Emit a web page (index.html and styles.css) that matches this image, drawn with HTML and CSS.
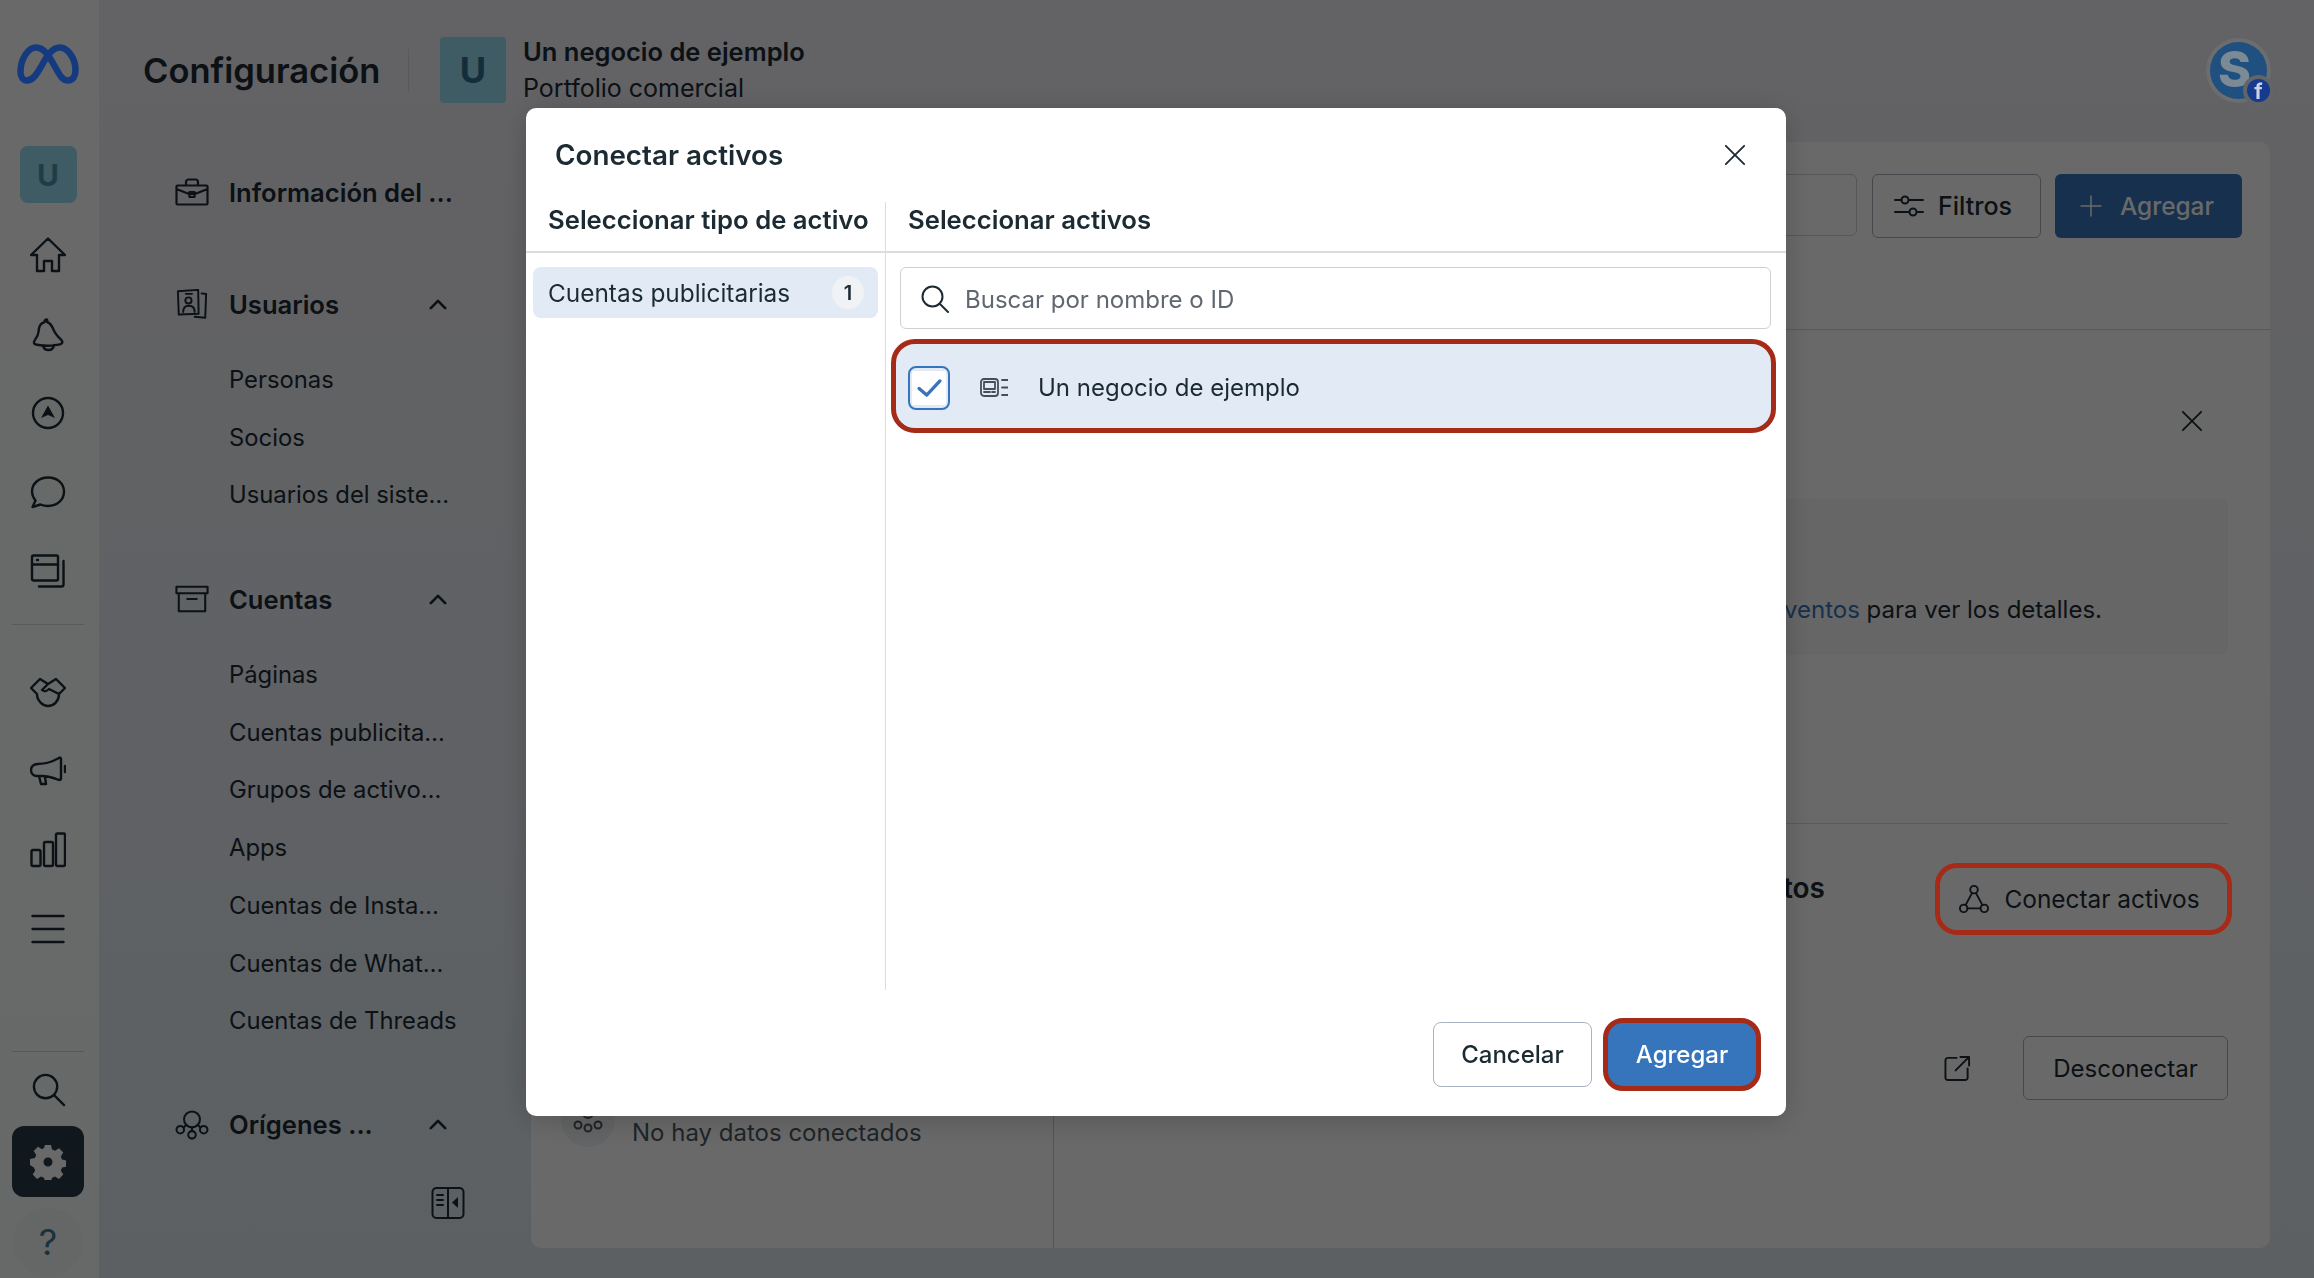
FILE: index.html
```html
<!DOCTYPE html>
<html lang="es">
<head>
  <meta charset="UTF-8" />
  <meta name="viewport" content="width=device-width, initial-scale=1.0" />
  <title>Configuración</title>
  <link rel="stylesheet" href="styles.css">
</head>
<body>
  <div class="app">
    <!-- barra de iconos -->
    <aside class="rail">
      <svg class="meta-logo" viewBox="0 0 62 40"><path d="M3.500 28C3.500 15 11 3.500 19 3.500c8 0 13 8.500 18 17.500s8 15.500 14 15.500c5 0 7.500-4.500 7.500-10.500C58.500 15 51 3.500 43 3.500c-8 0-13 8.500-18 17.500s-9 15.500-15 15.500c-4 0-6.500-3.500-6.500-8.500z"/></svg>
      <div class="rail-avatar">U</div>
      <div class="rail-icon"><svg viewBox="0 0 36 36"><path d="M18 1.500 35 18h-6v16h-7V24h-8v10H7V18H1z"/></svg></div>
      <div class="rail-icon"><svg viewBox="0 0 36 36"><path d="M17 3.500c-1.500 0-2.500 1-2.500 2.500C9 8 9 12 8.500 16c-.5 5-4 7.500-4.500 10-.3 2 1 2.500 3 2.800 7 1.200 16 1.200 23-.5 2-.5 3-2 2-3.500-2-3-5-4-7.500-9-2-4-2.500-8-7.500-9.800C17.500 5 17.500 4 17 3.500zM13 29.500c.5 3 3 4.500 5.500 4.500s5-1.500 5.500-5"/></svg></div>
      <div class="rail-icon"><svg viewBox="0 0 36 36"><circle cx="18" cy="18" r="15"/><path class="solid" d="M18 10.500 25 23l-7-3-7 3z"/></svg></div>
      <div class="rail-icon"><svg viewBox="0 0 36 36"><path d="M18 3.500C9 3.500 2 9.500 2 17.500c0 3.500 1.500 6.500 3.500 9L2.500 33l8-2.500c2.300 1 4.800 1.500 7.500 1.500 9 0 16-6 16-14.500S27 3.500 18 3.500z"/></svg></div>
      <div class="rail-icon"><svg viewBox="0 0 36 36"><rect x="2" y="2.500" width="26" height="25" rx="1.500"/><path d="M2 11.500h26M7 7h1M33.500 8v23.500a2 2 0 0 1-2 2H9"/></svg></div>
      <div class="rail-divider rail-divider-top"></div>
      <div class="rail-icon"><svg viewBox="0 0 36 30"><path d="M10 2 1 11l6 6c0 7 6 12 11 12 6 0 11-5 11-12l6-6-9-9-8 5zM18 7l-6 6c2 2 5 1 7-1l10 5"/></svg></div>
      <div class="rail-icon"><svg viewBox="0 0 36 30"><path d="M29 2C22 6 14 8 8 8c-5 0-7 3-7 6s2 6 6 6h5c6 0 12 2 17 4 1 0 2-1 2-2V3c0-1-1-2-2-1zM9 20l2 8h5l-1-7M35 10v6"/></svg></div>
      <div class="rail-icon"><svg viewBox="0 0 36 36"><rect x="1.500" y="18" width="9" height="16" rx="1.500"/><rect x="14" y="10" width="9" height="24" rx="1.500"/><rect x="26" y="1.500" width="9" height="32.500" rx="1.500"/></svg></div>
      <div class="rail-icon"><svg viewBox="0 0 36 36"><path d="M2.500 5h31M2.500 18h31M2.500 31h31"/></svg></div>
      <div class="rail-spacer"></div>
      <div class="rail-divider"></div>
      <div class="rail-search"><svg viewBox="0 0 36 36"><circle cx="15" cy="15" r="12"/><path d="M24 24l10 10"/></svg></div>
      <div class="rail-gear">
        <svg viewBox="0 0 36 36"><path fill="currentColor" fill-rule="evenodd" d="M15 1h6l1 4.500 3 1.300 4-2.500 4.300 4.300-2.500 4 1.300 3 4.900 1v6l-4.900 1-1.300 3 2.500 4-4.300 4.300-4-2.500-3 1.300-1 4.800h-6l-1-4.800-3-1.300-4 2.500-4.300-4.300 2.500-4-1.300-3L0 21v-6l4.900-1 1.300-3-2.500-4L8 2.800l4 2.500 2-1.300zM18 13.500a4.500 4.500 0 1 0 0 9 4.500 4.500 0 0 0 0-9z"/></svg>
      </div>
      <div class="rail-help">?</div>
    </aside>

    <div class="page">
      <header class="topbar">
        <h1 class="topbar-title">Configuración</h1>
        <div class="topbar-sep"></div>
        <div class="org-avatar">U</div>
        <div class="org-info">
          <div class="org-name">Un negocio de ejemplo</div>
          <div class="org-type">Portfolio comercial</div>
        </div>
        <div class="user-avatar">S<span class="fb-badge">f</span></div>
      </header>

      <div class="workspace">
        <nav class="sidebar">
          <div class="nav-section nav-section-first">
            <div class="nav-head">
              <svg viewBox="0 0 34 28"><path d="M2.500 7.500h29a1 1 0 0 1 1 1v17a1 1 0 0 1-1 1h-29a1 1 0 0 1-1-1v-17a1 1 0 0 1 1-1zM1.500 11 14 16h6l12.500-5M11 7.500V4c0-1.500 1-2.500 2.500-2.500h7C22 1.500 23 2.500 23 4v3.500M14.500 14h5v5h-5z"/></svg>
              <span>Información del ...</span>
            </div>
          </div>
          <div class="nav-section">
            <div class="nav-head">
              <svg viewBox="0 0 36 34"><path d="M2 2.500 25 1l.5 27L3 29zM29 5l5 .5-1 27-12-1M11 5.500h7M8 26c0-5 3-7 6.500-7s6.500 2 6.500 7"/><circle cx="14" cy="13" r="3.500"/></svg>
              <span>Usuarios</span>
              <svg class="chevron" viewBox="0 0 20 12"><path d="M2 10l8-8 8 8"/></svg>
            </div>
            <a class="nav-item">Personas</a>
            <a class="nav-item">Socios</a>
            <a class="nav-item">Usuarios del siste…</a>
          </div>
          <div class="nav-section">
            <div class="nav-head">
              <svg viewBox="0 0 36 30"><path d="M1.500 2h33v7h-33zM4 9v19h28V9M13 15h10"/></svg>
              <span>Cuentas</span>
              <svg class="chevron" viewBox="0 0 20 12"><path d="M2 10l8-8 8 8"/></svg>
            </div>
            <a class="nav-item">Páginas</a>
            <a class="nav-item">Cuentas publicita…</a>
            <a class="nav-item">Grupos de activo…</a>
            <a class="nav-item">Apps</a>
            <a class="nav-item">Cuentas de Insta…</a>
            <a class="nav-item">Cuentas de What…</a>
            <a class="nav-item">Cuentas de Threads</a>
          </div>
          <div class="nav-section">
            <div class="nav-head">
              <svg viewBox="0 0 36 32"><circle cx="18" cy="10" r="8.500"/><circle cx="5.500" cy="21" r="4"/><circle cx="18" cy="26.500" r="4"/><circle cx="30.500" cy="21" r="4"/><path d="M12 16l-3 2.500M18 18.500v4M24 16l3 2.500"/></svg>
              <span>Orígenes ...</span>
              <svg class="chevron" viewBox="0 0 20 12"><path d="M2 10l8-8 8 8"/></svg>
            </div>
          </div>
          <div class="sidebar-toggle">
            <svg viewBox="0 0 34 34"><rect x="1.500" y="2" width="31" height="30" rx="4"/><path d="M17 2v30M6 9h6M6 14h6M6 19h6"/><path class="solid" d="M27 11v11l-6-5.500z"/></svg>
          </div>
        </nav>

        <main class="panel">
          <div class="panel-toolbar">
            <div class="toolbar-search"></div>
            <button class="btn btn-outline btn-filter">
              <svg viewBox="0 0 30 24"><path d="M1 6h6M15 6h14M1 18h14M23 18h6"/><circle cx="11" cy="6" r="3.500"/><circle cx="19" cy="18" r="3.500"/></svg>
              Filtros
            </button>
            <button class="btn btn-primary">
              <svg viewBox="0 0 22 22"><path d="M11 1v20M1 11h20"/></svg>
              Agregar
            </button>
          </div>
          <div class="panel-body">
            <div class="panel-list">
              <div class="empty-row">
                <div class="empty-icon">
                  <svg viewBox="0 0 30 30"><circle cx="15" cy="8" r="5"/><circle cx="5" cy="20" r="3.500"/><circle cx="15" cy="23" r="3.500"/><circle cx="25" cy="20" r="3.500"/></svg>
                </div>
                <span>No hay datos conectados</span>
              </div>
            </div>
            <div class="panel-detail">
              <div class="detail-close">
                <svg viewBox="0 0 24 24"><path d="M2 2l20 20M22 2 2 22"/></svg>
              </div>
              <div class="detail-note">
                <p>Selecciona uno de los <a>eventos</a> para ver los detalles.</p>
              </div>
              <div class="detail-section">
                <h2>Conjuntos</h2>
                <button class="btn btn-plain">
                  <svg viewBox="0 0 32 32"><circle cx="16" cy="6" r="4"/><circle cx="5" cy="26" r="4"/><circle cx="27" cy="26" r="4"/><path d="M14 9.500 7 22.500M18 9.500l7 13M9 26h14"/></svg>
                  Conectar activos
                </button>
              </div>
              <div class="detail-actions">
                <svg viewBox="0 0 28 28"><path d="M13 3H4a2.500 2.500 0 0 0-2.500 2.500v18A2.500 2.500 0 0 0 4 26h18a2.500 2.500 0 0 0 2.500-2.500V14M12 16 26 2M17 2h9v9"/></svg>
                <button class="btn btn-outline btn-disconnect">Desconectar</button>
              </div>
            </div>
          </div>
        </main>
      </div>
    </div>
  </div>

  <!-- capa oscura y dialogo -->
  <div class="overlay">
    <div class="callout callout-connect"></div>
    <div class="modal">
      <div class="modal-header">
        <h2>Conectar activos</h2>
        <svg class="modal-close" viewBox="0 0 24 24"><path d="M2 2l20 20M22 2 2 22"/></svg>
      </div>
      <div class="modal-columns">
        <div class="col-types">
          <div class="col-title">Seleccionar tipo de activo</div>
          <div class="type-item">
            <span>Cuentas publicitarias</span>
            <span class="type-count">1</span>
          </div>
        </div>
        <div class="col-assets">
          <div class="col-title">Seleccionar activos</div>
          <div class="asset-search">
            <svg viewBox="0 0 28 28"><circle cx="11.500" cy="11.500" r="10"/><path d="M19 19l8 8"/></svg>
            <span>Buscar por nombre o ID</span>
          </div>
          <div class="asset-row">
            <div class="check-box">
              <div class="check-inner">
                <svg viewBox="0 0 26 19"><path d="M2 10l8 7L24 2"/></svg>
              </div>
            </div>
            <svg class="asset-icon" viewBox="0 0 28 19"><rect x="1" y="1" width="17" height="17" rx="3"/><rect x="4" y="4" width="11" height="7"/><path d="M4 14h6M12 14h3M22 2h6M22 9.500h6M22 17h6"/></svg>
            <span>Un negocio de ejemplo</span>
          </div>
        </div>
      </div>
      <div class="modal-footer">
        <button class="btn-modal btn-cancel">Cancelar</button>
        <button class="btn-modal btn-add">Agregar</button>
      </div>
    </div>
  </div>
</body>
</html>
```

FILE: styles.css
```css
* {
  box-sizing: border-box;
}
body {
  margin: 0;
  height: 100vh;
  overflow: hidden;
  font-family: 'Inter', 'Noto Sans', sans-serif;
  color: #1c2b33;
  background: linear-gradient(180deg, #f1eff4, #e1eaf1);
}
svg {
  fill: none;
  stroke: currentColor;
  stroke-width: 2;
  stroke-linejoin: round;
  stroke-linecap: round;
  display: block;
}
svg .solid {
  fill: currentColor;
  stroke: none;
}
button {
  font-family: inherit;
}
.app {
  display: flex;
  height: 100%;
}

/* barra de iconos */
.rail {
  width: 99px;
  flex: none;
  padding-right: 3px;
  display: flex;
  flex-direction: column;
  align-items: center;
  background: linear-gradient(180deg, #ffffff, #fbfeff);
}
/* el logo y el avatar se ven mas vivos que el resto bajo la capa */
.meta-logo {
  width: 62px;
  height: 40px;
  margin-top: 44px;
  color: #143a80;
  stroke-width: 6.500;
  position: relative;
  z-index: 2;
}
.rail-avatar {
  width: 57px;
  height: 57px;
  margin-top: 62px;
  margin-bottom: 12px;
  border-radius: 8px;
  background: #9adcf0;
  color: #4f95ad;
  font-size: 30px;
  font-weight: 700;
  display: flex;
  align-items: center;
  justify-content: center;
}
.rail-icon {
  height: 79px;
  flex: none;
  display: flex;
  align-items: center;
  justify-content: center;
}
.rail-icon svg {
  width: 36px;
  height: 36px;
  stroke-width: 2.400;
}
.rail-divider {
  width: 72px;
  height: 1px;
  flex: none;
  background: #d5d8dc;
}
.rail-divider-top {
  margin-top: 14px;
  margin-bottom: 27px;
}
.rail-spacer {
  flex: 1;
}
.rail-search {
  height: 74px;
  flex: none;
  display: flex;
  align-items: center;
  justify-content: center;
}
.rail-search svg {
  width: 35px;
  height: 35px;
  stroke-width: 2.400;
}
.rail-gear {
  width: 72px;
  height: 71px;
  flex: none;
  border-radius: 12px;
  background: #273a49;
  color: #ffffff;
  display: flex;
  align-items: center;
  justify-content: center;
}
.rail-gear svg {
  width: 36px;
  height: 36px;
  stroke: none;
}
.rail-help {
  width: 70px;
  height: 70px;
  flex: none;
  margin: 10px 0 1px;
  border-radius: 50%;
  background: #f6f7f8;
  color: #3c7d90;
  font-size: 36px;
  display: flex;
  align-items: center;
  justify-content: center;
}

/* cabecera */
.page {
  flex: 1;
  min-width: 0;
  display: flex;
  flex-direction: column;
}
.topbar {
  height: 142px;
  flex: none;
  padding: 0 44px 2px 44px;
  display: flex;
  align-items: center;
}
.topbar-title {
  margin: 0;
  font-size: 34.500px;
  font-weight: 600;
  width: 265px;
  flex: none;
}
.topbar-sep {
  width: 1px;
  height: 43px;
  background: #d5d8dc;
  margin-right: 31px;
}
.org-avatar {
  width: 66px;
  height: 66px;
  flex: none;
  border-radius: 4px;
  background: #9adcf0;
  color: #2f6e8f;
  font-size: 36px;
  font-weight: 700;
  display: flex;
  align-items: center;
  justify-content: center;
}
.org-info {
  margin-left: 17px;
  font-size: 25px;
  line-height: 36px;
}
.org-name {
  font-size: 25.500px;
  font-weight: 600;
}
.user-avatar {
  width: 57px;
  height: 57px;
  margin-left: auto;
  margin-right: 3px;
  border-radius: 50%;
  background: #1f5080;
  box-shadow: 0 0 0 4px #6b6d6e;
  color: #7c8a96;
  font-size: 50px;
  font-weight: 800;
  line-height: 54px;
  text-align: left;
  padding-left: 8px;
  position: relative;
  z-index: 2;
}
.fb-badge {
  position: absolute;
  right: -3px;
  bottom: -3px;
  width: 23px;
  height: 23px;
  border-radius: 50%;
  background: #153a8f;
  box-shadow: 0 0 0 4px #626568;
  color: #c9d3e4;
  font-size: 21px;
  font-weight: 700;
  line-height: 26px;
  text-align: center;
}

/* menu lateral */
.workspace {
  flex: 1;
  min-height: 0;
  display: flex;
}
.sidebar {
  width: 432px;
  flex: none;
  padding: 22px 0 0 76px;
  display: flex;
  flex-direction: column;
}
.nav-section {
  margin-top: 47px;
}
.nav-section-first {
  margin-top: 0;
}
.nav-head {
  height: 58px;
  margin-bottom: 17px;
  padding-bottom: 2px;
  display: flex;
  align-items: center;
  font-size: 25.600px;
  font-weight: 600;
}
.nav-section-first .nav-head {
  margin-bottom: 7px;
}
.nav-head svg {
  width: 34px;
  height: 30px;
  flex: none;
  margin-right: 20px;
  stroke-width: 2.200;
}
.nav-head .chevron {
  width: 18px;
  height: 11px;
  margin-left: auto;
  margin-right: 84px;
  stroke-width: 3;
}
.nav-item {
  display: block;
  height: 57.700px;
  line-height: 57.700px;
  padding-left: 54px;
  font-size: 23.800px;
}
.sidebar-toggle {
  align-self: flex-end;
  margin: 14px 66px 0 0;
}
.sidebar-toggle svg {
  width: 34px;
  height: 34px;
}

/* panel principal */
.panel {
  flex: 1;
  min-width: 0;
  margin: 0 44px 30px 0;
  border-radius: 10px;
  background: #ffffff;
  display: flex;
  flex-direction: column;
}
.panel-toolbar {
  height: 188px;
  flex: none;
  padding: 32px 28px 0 0;
  border-bottom: 1px solid #d5d8dc;
  display: flex;
  align-items: flex-start;
  justify-content: flex-end;
  gap: 14px;
}
.toolbar-search {
  width: 300px;
  height: 62px;
  margin-right: 1px;
  border: 1px solid #cbd0d6;
  border-radius: 6px;
}
.btn {
  height: 64px;
  border-radius: 6px;
  font-size: 25px;
  font-weight: 500;
  display: flex;
  align-items: center;
  justify-content: center;
  cursor: pointer;
  color: inherit;
  background: #ffffff;
  border: none;
}
.btn-outline {
  border: 1px solid #a9b0b8;
}
.btn-filter {
  width: 169px;
  padding-left: 21px;
  justify-content: flex-start;
  gap: 14px;
}
.btn-filter svg {
  width: 30px;
  height: 24px;
}
.btn-primary {
  width: 187px;
  padding-left: 25px;
  justify-content: flex-start;
  gap: 18px;
  font-size: 24.400px;
  background: #3675bb;
  color: #ffffff;
}
.btn-primary svg {
  width: 22px;
  height: 22px;
  stroke-width: 1.500;
}
.panel-body {
  flex: 1;
  min-height: 0;
  display: flex;
}
.panel-list {
  width: 523px;
  flex: none;
  border-right: 1px solid #c6cbd1;
  display: flex;
  flex-direction: column;
  justify-content: flex-end;
  padding: 0 0 97px 30px;
}
.empty-row {
  display: flex;
  align-items: flex-start;
  font-size: 24px;
  color: #4a5862;
}
.empty-row span {
  margin-left: 17px;
  line-height: 36px;
}
.empty-icon {
  width: 54px;
  height: 54px;
  margin-top: -22px;
  border-radius: 50%;
  background: #f1f3f5;
  display: flex;
  align-items: center;
  justify-content: center;
}
.empty-icon svg {
  width: 30px;
  height: 30px;
}
.panel-detail {
  flex: 1;
  min-width: 0;
  padding: 71px 42px 0 0;
}
.detail-close {
  height: 40px;
  display: flex;
  align-items: center;
  justify-content: flex-end;
  padding-right: 25px;
}
.detail-close svg {
  width: 22px;
  height: 22px;
}
.detail-note {
  height: 156px;
  margin-top: 58px;
  margin-left: 30px;
  border-radius: 8px;
  background: #f7f8fa;
  padding: 93px 126px 0 0;
  text-align: right;
  font-size: 24px;
  line-height: 36px;
}
.detail-note p {
  margin: 0;
}
.detail-note a {
  color: #3675bb;
}
.detail-section {
  margin-top: 168px;
  margin-left: 30px;
  border-top: 1px solid #d5d8dc;
  padding-top: 44px;
  display: flex;
  align-items: flex-start;
  justify-content: space-between;
}
.detail-section h2 {
  margin: 0 0 0 auto;
  padding-right: 116px;
  font-size: 28px;
  font-weight: 600;
  line-height: 40px;
}
.btn-plain {
  width: 287px;
  height: 62px;
  gap: 15px;
  flex: none;
  padding-right: 16px;
  font-size: 24.400px;
  font-weight: 400;
}
.btn-plain svg {
  width: 30px;
  height: 30px;
}
.detail-actions {
  margin-top: 106px;
  display: flex;
  align-items: center;
  justify-content: flex-end;
  gap: 52px;
}
.detail-actions svg {
  width: 27px;
  height: 27px;
}
.btn-disconnect {
  width: 205px;
  font-size: 24px;
  font-weight: 400;
}

/* capa y dialogo */
.overlay {
  position: fixed;
  inset: 0;
  background: rgba(0, 0, 0, 0.59);
  display: flex;
  justify-content: center;
  align-items: flex-start;
  padding: 108px 2px 0 0;
}
.callout {
  position: absolute;
  border: 5px solid #a52a18;
  border-radius: 22px;
}
.callout-connect {
  left: 1935px;
  top: 863px;
  width: 297px;
  height: 72px;
}
.modal {
  width: 1260px;
  height: 1008px;
  border-radius: 10px;
  background: #ffffff;
  color: #1c2b33;
  box-shadow: 0 4px 30px rgba(0, 0, 0, 0.2);
  display: flex;
  flex-direction: column;
}
.modal-header {
  height: 94px;
  flex: none;
  padding: 0 40px 0 29px;
  display: flex;
  align-items: center;
  justify-content: space-between;
}
.modal-header h2 {
  margin: 0;
  font-size: 27.800px;
  font-weight: 600;
}
.modal-close {
  width: 22px;
  height: 22px;
}
.modal-columns {
  flex: 1;
  min-height: 0;
  display: flex;
}
.col-title {
  height: 51px;
  flex: none;
  border-bottom: 2px solid #dadde1;
  font-size: 25.700px;
  font-weight: 600;
  line-height: 36px;
}
.col-types {
  width: 360px;
  flex: none;
  border-right: 1px solid #dadde1;
}
.col-types .col-title {
  padding-left: 22px;
}
.type-item {
  height: 51px;
  margin: 14px 7px;
  padding: 0 14px 0 15px;
  border-radius: 8px;
  background: #e2ebf5;
  font-size: 24.400px;
  display: flex;
  align-items: center;
  justify-content: space-between;
}
.type-count {
  width: 32px;
  height: 33px;
  border-radius: 50%;
  background: #f0f2f5;
  font-size: 20px;
  font-weight: 600;
  display: flex;
  align-items: center;
  justify-content: center;
}
.col-assets {
  flex: 1;
  min-width: 0;
}
.col-assets .col-title {
  padding-left: 22px;
}
.asset-search {
  height: 62px;
  margin: 14px 15px 0 14px;
  padding: 2px 20px 0;
  border: 1px solid #ced0d4;
  border-radius: 6px;
  color: #606770;
  font-size: 24px;
  display: flex;
  align-items: center;
  gap: 16px;
}
.asset-search svg {
  width: 28px;
  height: 28px;
  color: #1c2b33;
}
.asset-row {
  height: 94px;
  margin: 10px 10px 0 5px;
  padding: 3px 0 0 12px;
  border: 5px solid #a52a18;
  border-radius: 24px;
  background: #e2ebf5;
  font-size: 24px;
  display: flex;
  align-items: center;
}
.check-box {
  width: 42px;
  height: 44px;
  flex: none;
  padding: 3px 2px;
  border: 2px solid #3675bb;
  border-radius: 8px;
  color: #3675bb;
}
.check-inner {
  height: 100%;
  background: #ffffff;
  display: flex;
  align-items: center;
  justify-content: center;
}
.check-inner svg {
  width: 25px;
  height: 18px;
  stroke-width: 3.500;
}
.asset-icon {
  width: 28px;
  height: 19px;
  flex: none;
  margin: 0 30px;
  color: #444f57;
  stroke-width: 1.800;
}
.modal-footer {
  height: 126px;
  flex: none;
  padding: 3px 25px 0 0;
  display: flex;
  align-items: center;
  justify-content: flex-end;
  gap: 11px;
}
.btn-modal {
  border-radius: 8px;
  font-size: 24px;
  font-weight: 500;
  cursor: pointer;
}
.btn-cancel {
  width: 159px;
  height: 65px;
  border: 1px solid #aab3c2;
  background: #ffffff;
  color: #1c2b33;
}
.btn-add {
  width: 158px;
  height: 73px;
  border: 5px solid #a52a18;
  border-radius: 20px;
  background: #3675bb;
  color: #ffffff;
}
```
